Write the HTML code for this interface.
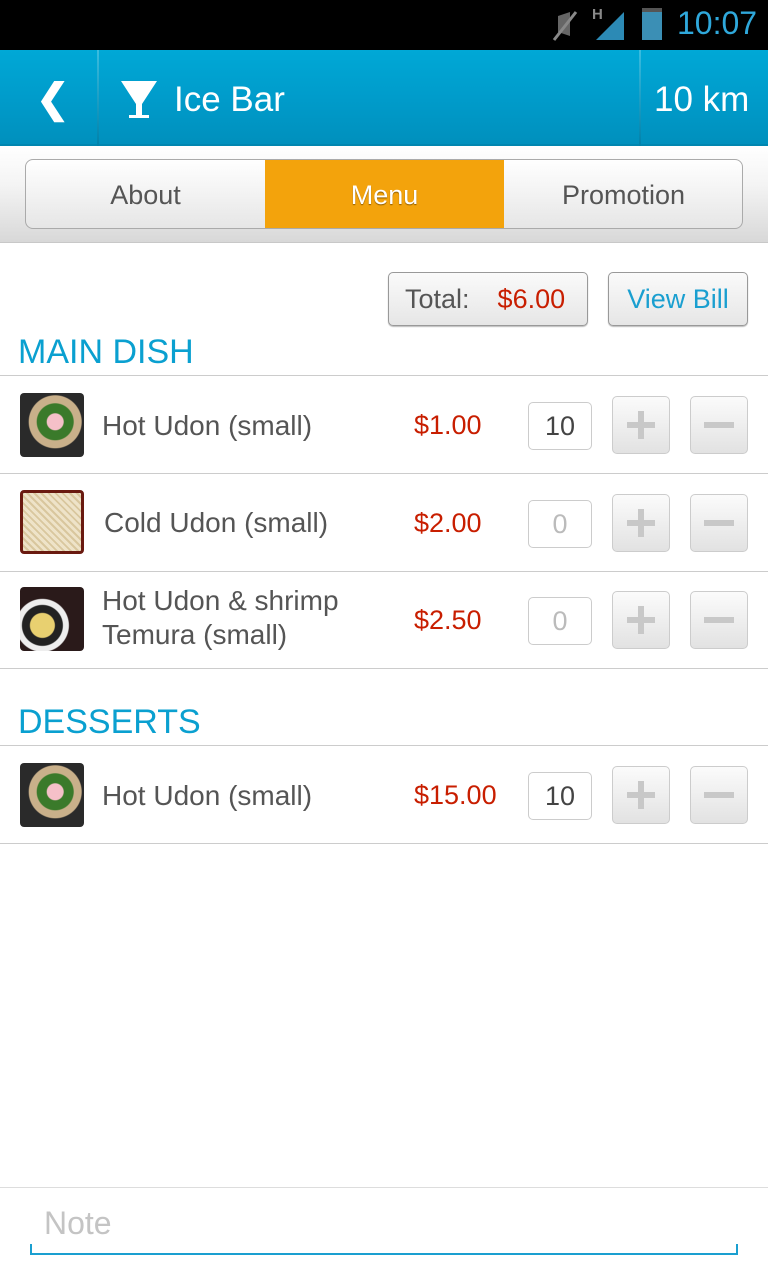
<!DOCTYPE html>
<html><head><style>
*{margin:0;padding:0;box-sizing:border-box}
body{width:768px;height:1280px;background:#fff;font-family:"Liberation Sans",sans-serif;position:relative;overflow:hidden}
.abs{position:absolute}
.status{left:0;top:0;width:768px;height:50px;background:#000}
.hdr{left:0;top:50px;width:768px;height:96px;background:linear-gradient(#00a8d6,#009ccb 50%,#0090bd);border-bottom:2px solid #0086b0}
.vl{top:50px;width:2px;height:96px;background:linear-gradient(#3bbde0,#0081aa)}
.tabbg{left:0;top:146px;width:768px;height:97px;background:linear-gradient(#fff,#f4f4f4 40%,#d8d8d8);border-bottom:1px solid #c8c8c8}
.tabs{left:25px;top:159px;width:718px;height:70px;border:1px solid #aaa;border-radius:8px;background:linear-gradient(#fff,#e6e6e6);overflow:hidden}
.tab{position:absolute;top:0;height:68px;line-height:70px;text-align:center;font-size:27px;color:#555}
.btn{border:1px solid #999;border-radius:5px;background:linear-gradient(#fafafa,#e6e6e6);box-shadow:0 1px 1px #bbb;font-size:27px}
.sec{left:18px;font-size:34px;color:#0aa0d0}
.hl{left:0;width:768px;height:1px;background:#ccc}
.img{left:20px;width:64px;height:64px;border-radius:4px;background:radial-gradient(circle at 55% 45%,#f5c0c8 0 8px,#3a7a2a 9px 18px,#c9b08a 19px 26px,#2a2a2a 27px)}
.name{left:102px;font-size:28px;color:#555;line-height:34px}
.price{left:414px;font-size:27px;color:#c81e00}
.qty{left:528px;width:64px;height:48px;border:1px solid #ccc;border-radius:5px;text-align:center;line-height:46px;font-size:27px;color:#444}
.pm{width:58px;height:58px;border:1px solid #ccc;border-radius:5px;background:linear-gradient(#fbfbfb,#e2e2e2)}
.pm i{position:absolute;background:#c8c8c8}
</style></head><body>
<div class="abs status">
<svg class="abs" style="left:550px;top:8px" width="30" height="34"><path d="M8 8 L20 4 L20 28 L8 24Z" fill="#666"/><line x1="4" y1="32" x2="26" y2="4" stroke="#888" stroke-width="3"/></svg>
<div class="abs" style="left:592px;top:6px;color:#888;font-size:15px;font-weight:bold">H</div>
<svg class="abs" style="left:596px;top:10px" width="32" height="32"><path d="M0 30 L28 2 L28 30Z" fill="#2c8ab5"/></svg>
<div class="abs" style="left:642px;top:8px;width:20px;height:32px;background:#3b8fb5;border-top:4px solid #555"></div>
<div class="abs" style="left:677px;top:5px;color:#2fa8db;font-size:32px">10:07</div>
</div>
<div class="abs hdr"></div>
<div class="abs vl" style="left:97px"></div>
<div class="abs vl" style="left:639px"></div>
<div class="abs" style="left:36px;top:76px;color:#fff;font-size:40px;font-weight:bold">❮</div>
<svg class="abs" style="left:120px;top:80px" width="38" height="40"><path d="M1 1 H37 L22 24 V35 H29 V38 H9 V35 H16 V24 Z" fill="#fff"/></svg>
<div class="abs" style="left:174px;top:80px;color:#fff;font-size:35px">Ice Bar</div>
<div class="abs" style="left:654px;top:80px;color:#fff;font-size:35px">10 km</div>
<div class="abs tabbg"></div>
<div class="abs tabs">
<div class="tab" style="left:0;width:239px">About</div>
<div class="tab" style="left:239px;width:239px;background:#f3a30c;color:#fff;text-shadow:0 1px 1px #8a5a00">Menu</div>
<div class="tab" style="left:478px;width:239px">Promotion</div>
</div>
<div class="abs btn" style="left:388px;top:272px;width:200px;height:54px;line-height:52px;padding-left:16px;color:#555">Total:<span style="color:#c81e00;margin-left:28px">$6.00</span></div>
<div class="abs btn" style="left:608px;top:272px;width:140px;height:54px;line-height:52px;text-align:center;color:#1a9fd0">View Bill</div>
<div class="abs sec" style="top:333px">MAIN DISH</div>
<div class="abs hl" style="top:375px"></div>

<div class="abs img" style="top:393px"></div>
<div class="abs name" style="top:409px">Hot Udon (small)</div>
<div class="abs price" style="top:410px">$1.00</div>
<div class="abs qty" style="top:402px">10</div>
<div class="abs pm" style="left:612px;top:396px"><i style="left:25px;top:14px;width:6px;height:28px"></i><i style="left:14px;top:25px;width:28px;height:6px"></i></div>
<div class="abs pm" style="left:690px;top:396px"><i style="left:13px;top:25px;width:30px;height:6px"></i></div>
<div class="abs hl" style="top:473px"></div>

<div class="abs img" style="top:490px;background:repeating-linear-gradient(45deg,#eee3c8 0 3px,#d9c79e 3px 5px);border:3px solid #6a1a10"></div>
<div class="abs name" style="top:506px;left:104px">Cold Udon (small)</div>
<div class="abs price" style="top:508px">$2.00</div>
<div class="abs qty" style="top:500px;color:#bbb">0</div>
<div class="abs pm" style="left:612px;top:494px"><i style="left:25px;top:14px;width:6px;height:28px"></i><i style="left:14px;top:25px;width:28px;height:6px"></i></div>
<div class="abs pm" style="left:690px;top:494px"><i style="left:13px;top:25px;width:30px;height:6px"></i></div>
<div class="abs hl" style="top:571px"></div>

<div class="abs img" style="top:587px;background:radial-gradient(circle at 35% 60%,#e8d070 0 12px,#222 13px 20px,#eee 21px 26px,#2a1a1a 27px)"></div>
<div class="abs name" style="top:584px">Hot Udon &amp; shrimp<br>Temura (small)</div>
<div class="abs price" style="top:605px">$2.50</div>
<div class="abs qty" style="top:597px;color:#bbb">0</div>
<div class="abs pm" style="left:612px;top:591px"><i style="left:25px;top:14px;width:6px;height:28px"></i><i style="left:14px;top:25px;width:28px;height:6px"></i></div>
<div class="abs pm" style="left:690px;top:591px"><i style="left:13px;top:25px;width:30px;height:6px"></i></div>
<div class="abs hl" style="top:668px"></div>

<div class="abs sec" style="top:703px">DESSERTS</div>
<div class="abs hl" style="top:745px"></div>
<div class="abs img" style="top:763px"></div>
<div class="abs name" style="top:779px">Hot Udon (small)</div>
<div class="abs price" style="top:780px">$15.00</div>
<div class="abs qty" style="top:772px">10</div>
<div class="abs pm" style="left:612px;top:766px"><i style="left:25px;top:14px;width:6px;height:28px"></i><i style="left:14px;top:25px;width:28px;height:6px"></i></div>
<div class="abs pm" style="left:690px;top:766px"><i style="left:13px;top:25px;width:30px;height:6px"></i></div>
<div class="abs hl" style="top:843px"></div>

<div class="abs hl" style="top:1187px;background:#ddd"></div>
<div class="abs" style="left:44px;top:1205px;font-size:32px;color:#c4c4c4">Note</div>
<div class="abs" style="left:30px;top:1244px;width:708px;height:11px;border:2px solid #1a9fd0;border-top:none"></div>
</body></html>
